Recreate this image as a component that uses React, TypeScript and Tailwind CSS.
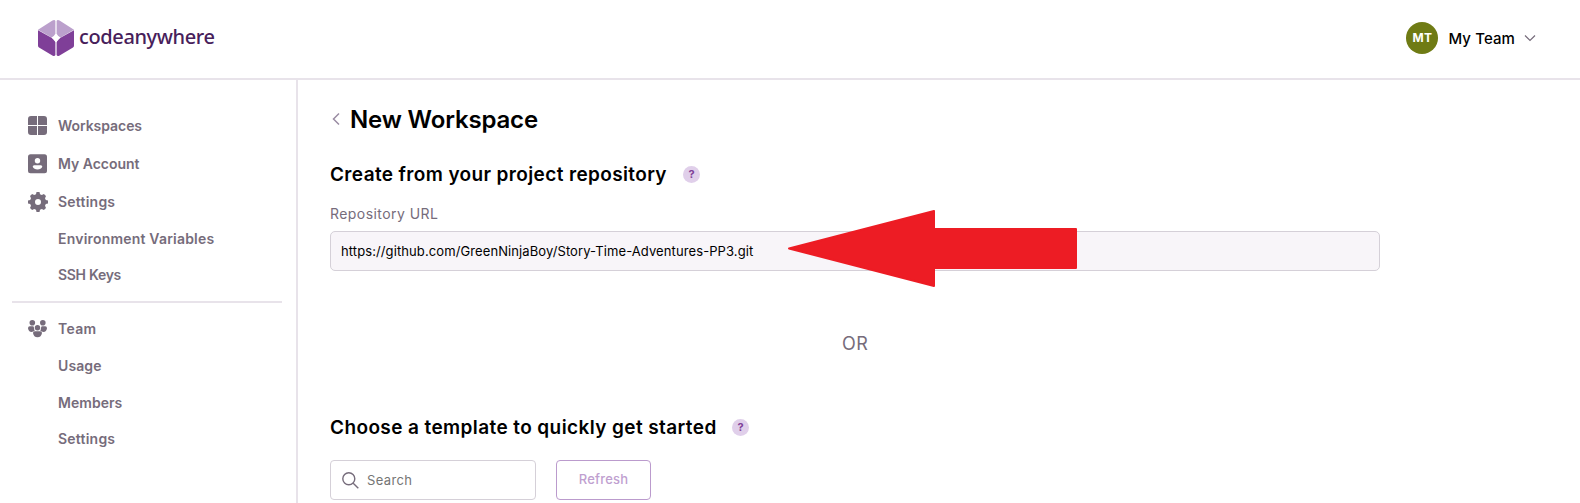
import React from 'react';

function Logo() {
  return (
    <svg className="block h-[36px] w-[36px] shrink-0" viewBox="0 0 36 36">
      <path d="M14.5 .4Q16.8-.5 17.4 1V13.500Q16.500 16.500 13.500 17.500L0 9.8Z" fill="#bba0cc" />
      <path d="M21.500 .4Q19.200-.5 18.600 1V13.500Q19.500 16.500 22.500 17.500L36 9.800Z" fill="#bba0cc" />
      <path d="M0 10.200 13.500 17.700Q16.500 18.700 17.400 22V35Q16.700 36.500 14.800 35.700L1 27.500Q0 26.800 0 25.500Z" fill="#7f3f98" />
      <path d="M36 10.200 22.500 17.700Q19.500 18.700 18.600 22V35Q19.300 36.500 21.200 35.700L35 27.500Q36 26.800 36 25.500Z" fill="#7f3f98" />
      <path d="M18 14 22 18 18 22.500 14 18Z" fill="#fff" />
    </svg>
  );
}

function GridIcon() {
  return (
    <svg className="h-[20px] w-[20px]" viewBox="0 0 20 20" fill="#766c7b">
      <path d="M3 0H9V9H0V3Q0 0 3 0ZM10 0H16Q19 0 19 3V9H10ZM0 10H9V19H3Q0 19 0 16ZM10 10H19V16Q19 19 16 19H10Z" />
    </svg>
  );
}

function AccountIcon() {
  return (
    <svg className="h-[20px] w-[20px]" viewBox="0 0 20 20">
      <rect y=".3" width="19" height="19" rx="2.500" fill="#766c7b" />
      <circle cx="9.500" cy="6.700" r="2.700" fill="#fff" />
      <path d="M4.700 12.800Q4.700 11.300 6.200 11.300H12.800Q14.300 11.300 14.300 12.800Q13 15.500 9.500 15.500T4.700 12.800Z" fill="#fff" />
    </svg>
  );
}

function GearIcon() {
  return (
    <svg className="h-[20px] w-[20px]" viewBox="0 0 20 20" fill="#766c7b">
      <path
        fillRule="evenodd"
        d="M8.500 0H11.500L12 2.200 13.800 2.900 15.900 1.900 18 4 17 6.200 17.800 8 20 8.500V11.500L17.800 12 17 13.800 18 16 15.900 18.100 13.800 17.100 12 17.800 11.500 20H8.500L8 17.800 6.200 17.100 4.100 18.100 2 16 3 13.800 2.200 12 0 11.500V8.500L2.200 8 3 6.200 2 4 4.100 1.900 6.200 2.900 8 2.200ZM10 7A3 3 0 1 0 10 13A3 3 0 1 0 10 7Z"
      />
    </svg>
  );
}

function TeamIcon() {
  return (
    <svg className="h-[20px] w-[20px]" viewBox="0 0 20 20" fill="#766c7b">
      <circle cx="4.300" cy="3.800" r="2.800" />
      <circle cx="14.800" cy="3.800" r="2.800" />
      <circle cx="9.500" cy="8.700" r="2.700" />
      <path d="M1.800 7.200H5Q6 7.500 6 9Q6 10.500 6.800 11.600Q5.300 13 3.600 13Q.5 13 0 9.300Q0 7.200 1.800 7.200ZM17.200 7.200H14Q13 7.500 13 9Q13 10.500 12.200 11.600Q13.700 13 15.400 13Q18.500 13 19 9.300Q19 7.200 17.200 7.200ZM6.800 12.300H12.200Q14 12.300 14 14Q13.300 18.200 9.500 18.200T5 14Q5 12.300 6.800 12.300Z" />
    </svg>
  );
}

type RowProps = { label: string; height: string; tracking: string; icon?: React.ReactNode };

function NavRow({ label, height, tracking, icon }: RowProps) {
  return (
    <a className={`flex items-center pl-7 text-sm font-semibold text-[#766c7b] ${height} ${tracking}`}>
      <span className="flex w-[30px] shrink-0">{icon}</span>
      {label}
    </a>
  );
}

function Help() {
  return (
    <span className="flex h-[17px] w-[17px] items-center justify-center rounded-full bg-[#e0cfea] text-[11px] font-bold text-[#7f3f98]">
      ?
    </span>
  );
}

export default function App() {
  return (
    <div className="flex h-[503px] w-[1580px] flex-col overflow-hidden bg-white font-['Inter',sans-serif] whitespace-nowrap">
      <header className="flex h-20 shrink-0 items-start justify-between border-b-2 border-[#e8e3ea] pr-[44px] pl-[38px]">
        <div className="flex items-start pt-5">
          <Logo />
          <span className="ml-[5px] pt-[2px] font-['Noto_Sans',sans-serif] text-[20px] leading-[30px] font-medium tracking-[-0.38px] text-[#47205a]">
            codeanywhere
          </span>
        </div>
        <div className="flex items-center pt-[22px]">
          <span className="flex h-8 w-8 items-center justify-center rounded-full bg-[#6f7b14] text-xs font-bold tracking-[0.3px] text-white">
            MT
          </span>
          <span className="ml-[10px] pt-px text-[15px] leading-[31px] font-medium tracking-[0.1px] text-black">
            My Team
          </span>
          <svg className="ml-[9px] h-3 w-3" viewBox="0 0 12 12" fill="none" stroke="#766c7b" strokeWidth="1.200">
            <path d="M1 3.500 6 8.500 11 3.500" />
          </svg>
        </div>
      </header>

      <div className="flex min-h-0 flex-1">
        <nav className="w-[298px] shrink-0 border-r-2 border-[#e8e3ea] pt-[27px]">
          <NavRow label="Workspaces" height="h-[38px]" tracking="tracking-[-0.06px]" icon={<GridIcon />} />
          <NavRow label="My Account" height="h-[38px]" tracking="tracking-[-0.02px]" icon={<AccountIcon />} />
          <NavRow label="Settings" height="h-[38px]" tracking="tracking-[0.22px]" icon={<GearIcon />} />
          <NavRow label="Environment Variables" height="h-[36px]" tracking="tracking-[0.2px]" />
          <NavRow label="SSH Keys" height="h-[36px]" tracking="tracking-[-0.3px]" />
          <div className="mt-2 mr-[14px] mb-[7px] ml-3 h-[2px] bg-[#e8e3ea]" />
          <NavRow label="Team" height="h-[37px]" tracking="tracking-[0.3px]" icon={<TeamIcon />} />
          <NavRow label="Usage" height="h-[37px]" tracking="tracking-[0.1px]" />
          <NavRow label="Members" height="h-[37px]" tracking="tracking-[0.03px]" />
          <NavRow label="Settings" height="h-[36px]" tracking="tracking-[0.22px]" />
        </nav>

        <main className="flex flex-col pt-[23px] pl-8 text-black">
          <div className="flex h-8 items-center">
            <svg className="h-[14px] w-[10px]" viewBox="0 0 10 14" fill="none" stroke="#9a8ca3" strokeWidth="1.500">
              <path d="M9 1.500 3.500 7 9 12.500" />
            </svg>
            <h1 className="ml-[10px] pt-px text-2xl leading-[31px] font-semibold tracking-[-0.16px]">New Workspace</h1>
          </div>

          <div className="mt-[23px] flex h-8 items-center">
            <h2 className="w-[353px] pt-[2px] text-[19px] font-semibold tracking-[0.37px]">
              Create from your project repository
            </h2>
            <Help />
          </div>
          <label className="mt-[14px] text-sm tracking-[0.44px] text-[#766c7b]">Repository URL</label>
          <div className="relative mt-[7px] flex h-10 w-[1050px] items-center rounded-[5px] border border-[#d5d0d8] bg-[#f8f5f9] pl-[10px]">
            <span className="pt-[2px] text-[13px] tracking-[0.1px]">
              https://github.com/GreenNinjaBoy/Story-Time-Adventures-PP3.git
            </span>
            <svg className="absolute top-[-22px] left-[456px] h-[78px] w-[291px]" viewBox="0 0 291 78">
              <path
                d="M2 38.500 147 1V19H289V58H147V76Z"
                fill="#ed1c24"
                stroke="#ed1c24"
                strokeWidth="2"
                strokeLinejoin="round"
              />
            </svg>
          </div>

          <div className="mt-[57px] ml-[512px] h-8 text-[18px] leading-8 tracking-[0.5px] text-[#766c7b]">OR</div>

          <div className="mt-[51px] flex h-8 items-center">
            <h2 className="w-[402px] pt-[2px] text-[19px] font-semibold tracking-[0.4px]">
              Choose a template to quickly get started
            </h2>
            <Help />
          </div>
          <div className="mt-[17px] flex gap-5">
            <div className="flex h-10 w-[206px] items-center rounded border border-[#d5d0d8] pl-[11px]">
              <svg className="h-[17px] w-[17px]" viewBox="0 0 17 17" fill="none" stroke="#766c7b" strokeWidth="1.400">
                <circle cx="6.800" cy="6.800" r="6" />
                <path d="M11.200 11.200 16.300 16.300" />
              </svg>
              <span className="ml-2 pt-px text-[13px] tracking-[0.35px] text-[#757575]">Search</span>
            </div>
            <button className="h-10 w-[95px] rounded border border-[#bb9bcd] pb-px text-[13px] font-medium tracking-[0.2px] text-[#c09fd0]">
              Refresh
            </button>
          </div>
        </main>
      </div>
    </div>
  );
}
